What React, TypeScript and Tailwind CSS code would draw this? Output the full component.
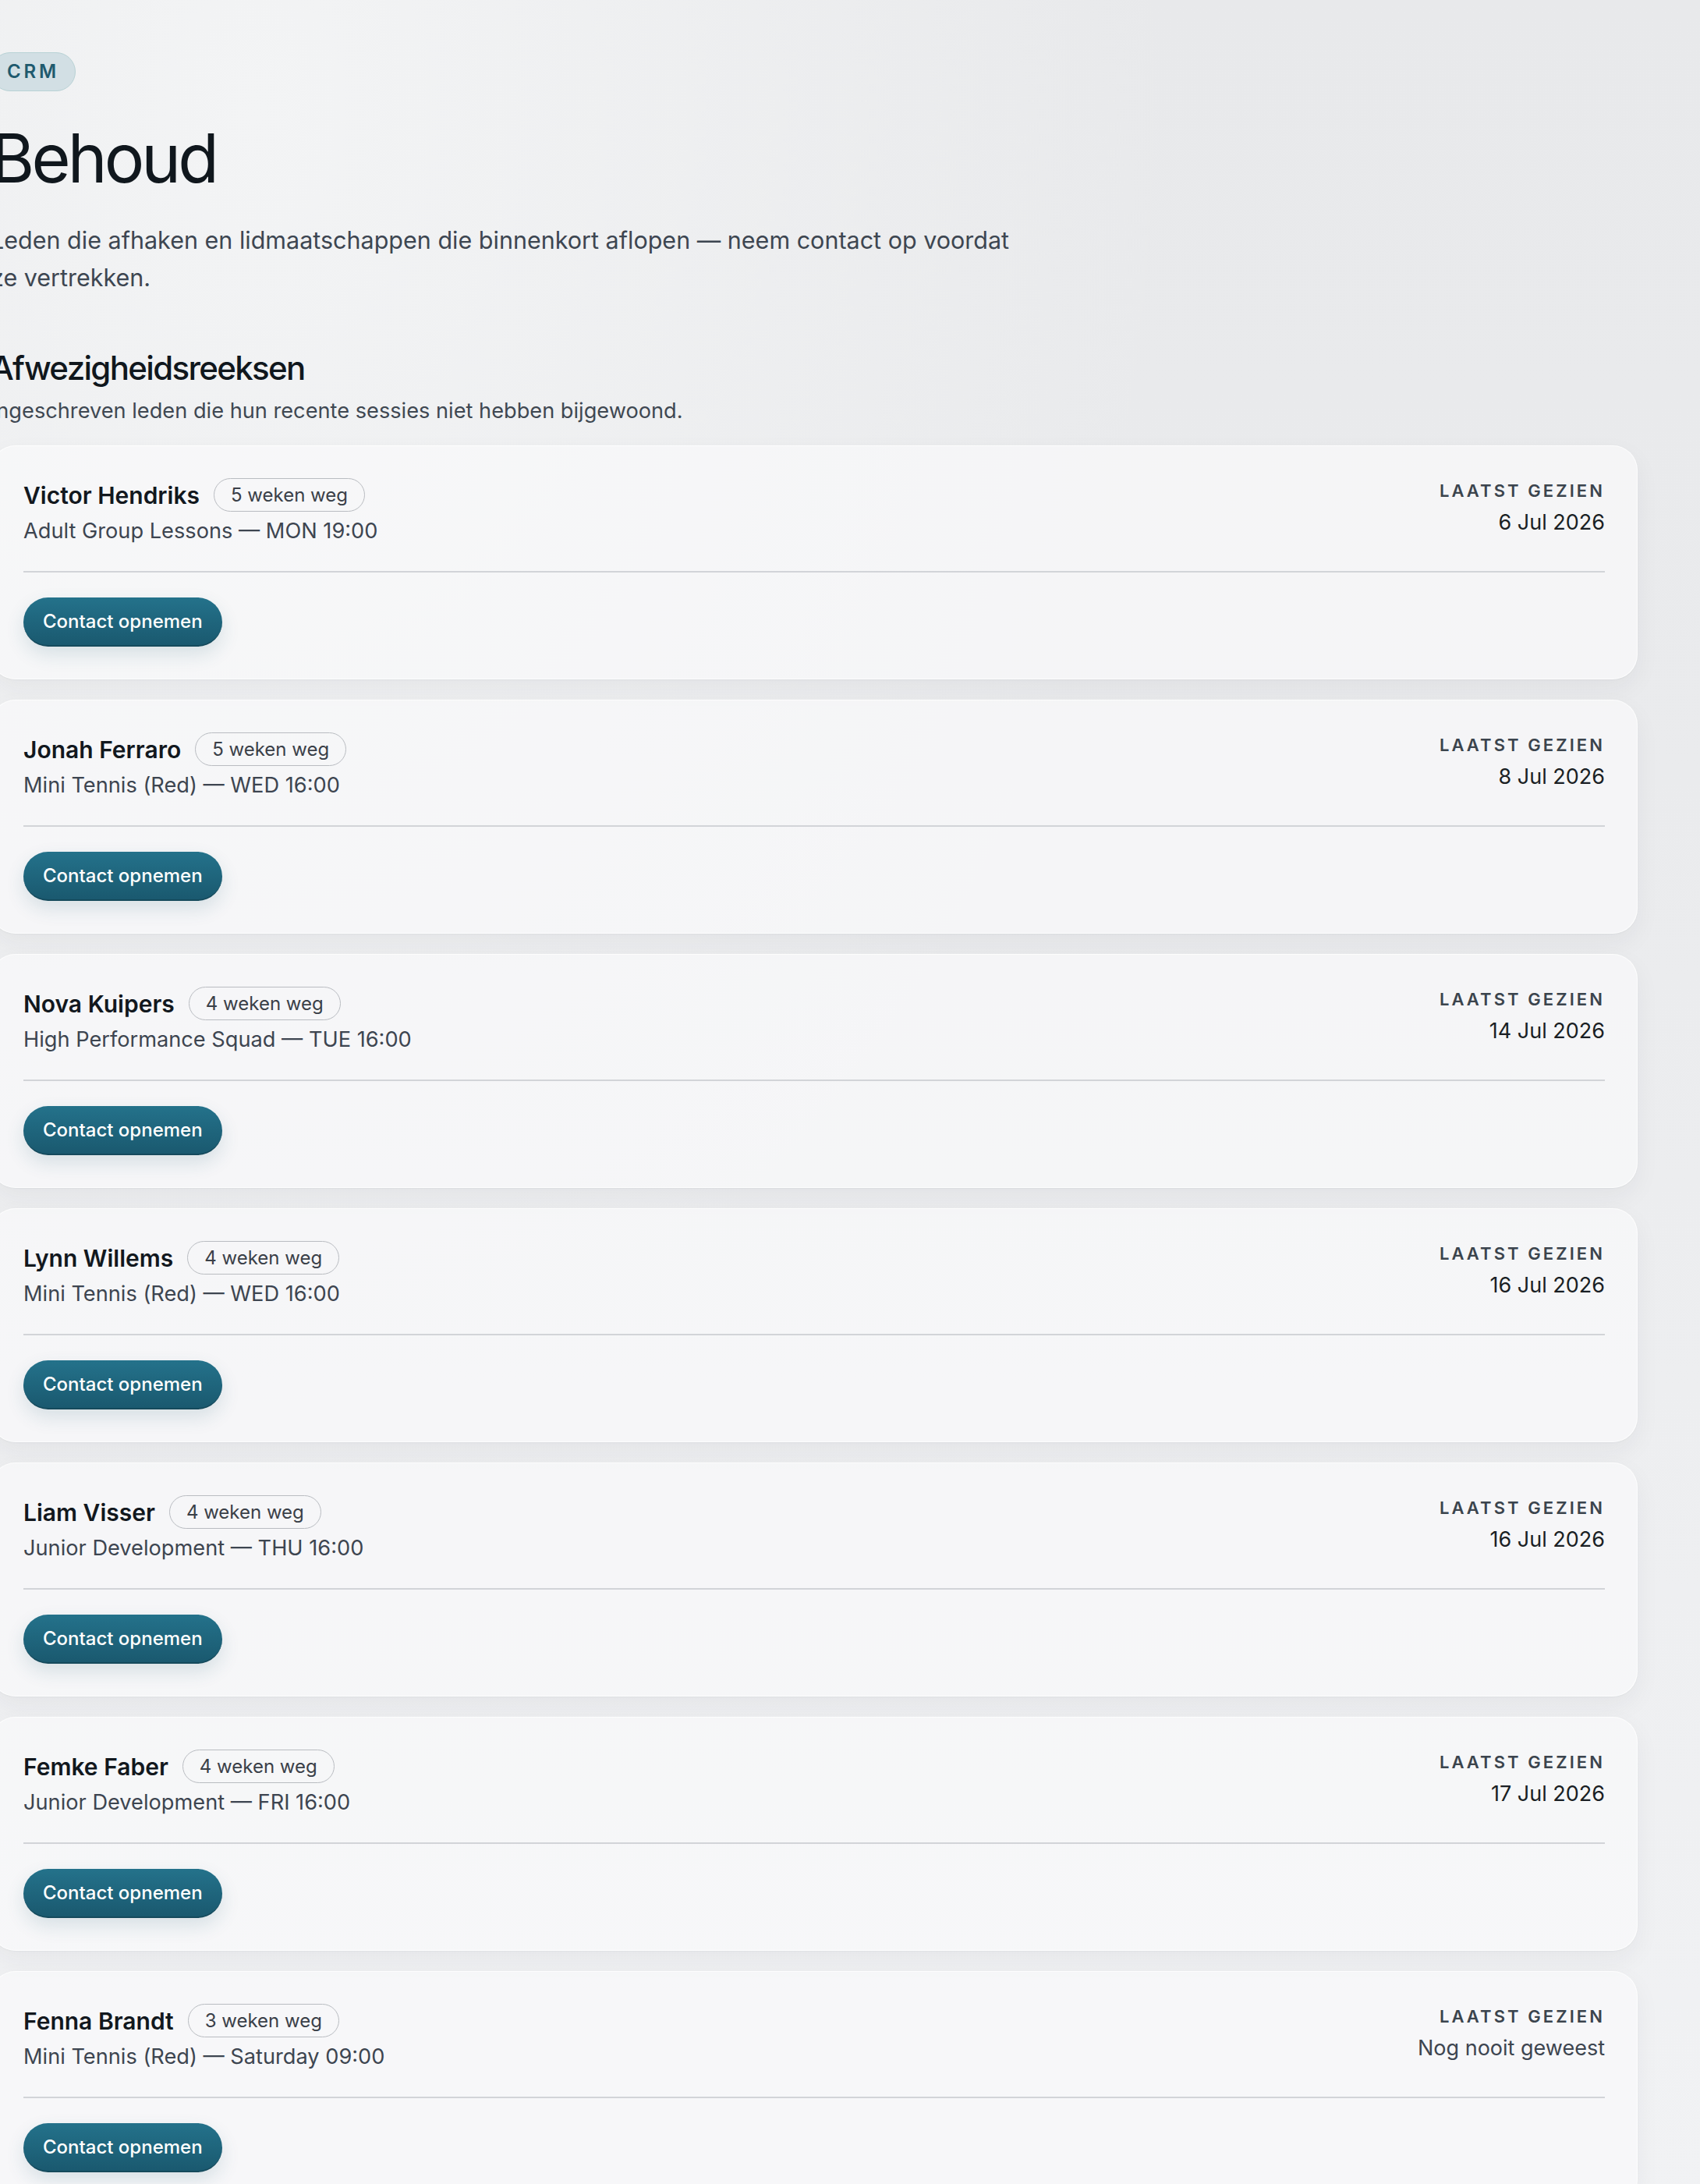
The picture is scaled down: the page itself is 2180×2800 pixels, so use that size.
import React from "react";

type Member = {
  name: string;
  away: string;
  group: string;
  lastSeen: string;
  never?: boolean;
};

const members: Member[] = [
  { name: "Victor Hendriks", away: "5 weken weg", group: "Adult Group Lessons — MON 19:00", lastSeen: "6 Jul 2026" },
  { name: "Jonah Ferraro", away: "5 weken weg", group: "Mini Tennis (Red) — WED 16:00", lastSeen: "8 Jul 2026" },
  { name: "Nova Kuipers", away: "4 weken weg", group: "High Performance Squad — TUE 16:00", lastSeen: "14 Jul 2026" },
  { name: "Lynn Willems", away: "4 weken weg", group: "Mini Tennis (Red) — WED 16:00", lastSeen: "16 Jul 2026" },
  { name: "Liam Visser", away: "4 weken weg", group: "Junior Development — THU 16:00", lastSeen: "16 Jul 2026" },
  { name: "Femke Faber", away: "4 weken weg", group: "Junior Development — FRI 16:00", lastSeen: "17 Jul 2026" },
  { name: "Fenna Brandt", away: "3 weken weg", group: "Mini Tennis (Red) — Saturday 09:00", lastSeen: "Nog nooit geweest", never: true },
];

function MemberCard({ member }: { member: Member }) {
  return (
    <div className="rounded-[32px] border border-white/80 bg-[#f9fafb]/70 p-[41px] shadow-[0_12px_32px_rgba(30,40,50,0.05),0_1px_2px_rgba(30,40,50,0.04)]">
      <div className="flex items-start justify-between">
        <div>
          <div className="flex h-[43px] items-center gap-[18px]">
            <span className="text-[30px] font-semibold leading-[42px] text-[#12181e]">{member.name}</span>
            <span className="flex h-[43px] items-center rounded-full border-[1.5px] border-[#b9bcc1] px-[21px] text-[24px] leading-none text-[#3a4048]">
              {member.away}
            </span>
          </div>
          <p className="mt-[5px] text-[27.2px] leading-[39px] text-[#3d4550]">{member.group}</p>
        </div>
        <div className="text-right">
          <p className="text-[22px] font-semibold uppercase leading-[33px] tracking-[0.14em] text-[#3b444d]">
            Laatst gezien
          </p>
          <p
            className={
              member.never
                ? "mt-[3px] text-[27px] leading-[42px] text-[#3d4550]"
                : "mt-[3px] text-[27px] leading-[42px] text-[#1a1f24]"
            }
          >
            {member.lastSeen}
          </p>
        </div>
      </div>

      <div className="mt-[32px] border-t-2 border-[#d2d4d8] pt-[32px]">
        <button className="flex h-[63px] items-center rounded-full border-b-2 border-[#154a5c] bg-gradient-to-b from-[#24728b] to-[#1a596f] px-[25px] text-[24px] font-medium text-white shadow-[0_10px_24px_rgba(26,89,111,0.14)]">
          Contact opnemen
        </button>
      </div>
    </div>
  );
}

export default function App() {
  return (
    <div
      className="min-h-screen overflow-hidden bg-[radial-gradient(ellipse_at_15%_5%,#f3f4f5_0%,rgba(243,244,245,0)_45%),linear-gradient(180deg,#e8e9eb_0%,#eaebed_35%,#f1f2f4_100%)]"
      style={{ fontFamily: "Inter, 'Noto Sans', sans-serif" }}
    >
      <div className="ml-[-12px] w-[2112px] pt-[67px]">
        <span className="inline-flex h-[50px] items-center rounded-full border-[1.5px] border-[#b8d2d5] bg-[#d2dfe4] px-[20px] text-[24px] font-semibold tracking-[0.16em] text-[#1f5a6e]">
          CRM
        </span>

        <h1 className="mt-[43px] text-[86px] font-normal leading-none tracking-[-0.045em] text-[#10171d]">
          Behoud
        </h1>
        <p className="mt-[38px] max-w-[1320px] text-[30.5px] leading-[48px] text-[#3d4651]">
          Leden die afhaken en lidmaatschappen die binnenkort aflopen — neem contact op voordat ze vertrekken.
        </p>

        <h2 className="mt-[65px] text-[42px] font-medium leading-[53px] tracking-[-0.04em] text-[#10171d]">
          Afwezigheidsreeksen
        </h2>
        <p className="mt-[9px] text-[27.2px] leading-[40px] text-[#3f4852]">
          Ingeschreven leden die hun recente sessies niet hebben bijgewoond.
        </p>

        <div className="mt-[24px] flex flex-col gap-[26px]">
          {members.map((m) => (
            <MemberCard key={m.name} member={m} />
          ))}
        </div>
      </div>
    </div>
  );
}
